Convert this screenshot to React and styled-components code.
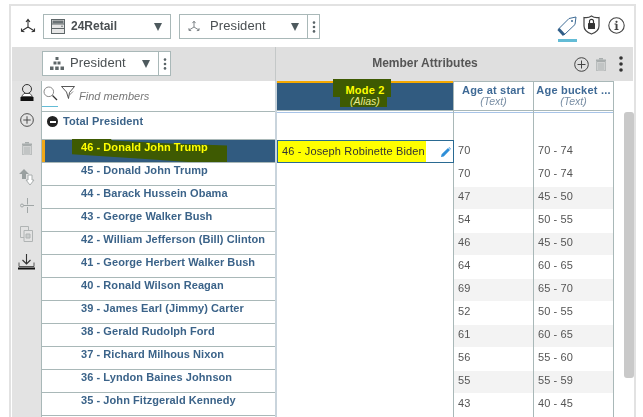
import React from 'react';
import styled, { createGlobalStyle } from 'styled-components';

const Global = createGlobalStyle`
  html, body { margin: 0; padding: 0; background: #fff; overflow: hidden; height: 417px; }
  body { font-family: "Liberation Sans", Arial, sans-serif; }
  * { box-sizing: border-box; }
`;
const Page = styled.div`width:643px;height:417px;padding:4px 8px 0 9px;overflow:hidden;filter:blur(.3px);`;
const Frame = styled.div`width:627px;height:413px;border:solid #e2e2e2;border-width:2px 2px 0 2px;padding-left:1px;display:flex;flex-direction:column;`;
const Toolbar = styled.div`height:41px;flex:none;display:flex;align-items:flex-start;padding:8px 0 0 4px;`;
const ToolIcon = styled.span`width:24px;height:25px;display:flex;align-items:center;justify-content:center;color:#333;margin-right:${p=>p.$mr||0}px;`;
const Select = styled.div`height:25px;width:${p=>p.$w}px;border:1px solid #a9b8b8;background:#fff;display:flex;align-items:center;padding-left:${p=>p.$pl||7}px;color:#4a4f52;font-size:${p=>p.$bold?12:13}px;font-weight:${p=>p.$bold?700:400};letter-spacing:${p=>p.$bold?0:.1}px;margin-left:${p=>p.$ml||0}px;`;
const SelectLabel = styled.span`flex:1;margin-left:${p=>p.$ml}px;margin-top:-2px;`;
const Caret = styled.span`width:0;height:0;border:solid transparent;border-width:8px 4.5px 0;border-top-color:#4e5a5e;margin-right:${p=>p.$mr||8}px;`;
const Dots = styled.div`height:25px;width:13px;margin-left:-1px;border:1px solid #a9b8b8;background:#fff;display:flex;align-items:center;justify-content:center;`;
const ToolRight = styled.div`margin-left:auto;display:flex;align-items:flex-start;padding-right:9px;gap:6px;margin-top:1px;`;
const TagWrap = styled.span`display:flex;flex-direction:column;width:20px;height:32px;align-items:center;`;
const TagLine = styled.i`display:block;width:19px;height:3px;background:#63bcd6;margin-top:2px;`;
const InfoWrap = styled.span`margin-left:2px;margin-top:2px;display:flex;`;
const HeaderBar = styled.div`height:34px;flex:none;display:grid;grid-template-columns:264px 1fr;background:#dfdfdf;margin-right:1px;`;
const HeaderLeft = styled.div`display:flex;align-items:flex-start;padding:4px 0 0 30px;border-right:1px solid #c4c8c8;`;
const HeaderRight = styled.div`display:flex;align-items:center;position:relative;padding:0 9px 0 0;`;
const HeaderTitle = styled.div`position:absolute;left:1px;width:296px;text-align:center;font-weight:700;font-size:12px;color:#555;top:9px;`;
const HeaderActions = styled.div`margin-left:auto;display:flex;align-items:center;gap:7px;`;
const TrashSlot = styled.span`display:flex;margin-right:5px;`;
const Body = styled.div`flex:1;display:flex;min-height:0;`;
const Strip = styled.div`width:29px;flex:none;background:#e3e3e3;display:flex;flex-direction:column;align-items:center;`;
const StripBtn = styled.span`height:${p=>p.$h}px;display:flex;align-items:center;justify-content:center;width:100%;`;
const Members = styled.div`width:236px;flex:none;border-right:2px solid #c9d4dc;border-left:1px solid #a9b8b8;`;
const SearchRow = styled.div`height:31px;display:flex;align-items:flex-start;padding:5px 0 0 1px;position:relative;border-bottom:1px solid #a9b8b8;`;
const FilterSlot = styled.span`margin-left:3px;display:flex;`;
const SearchUnderline = styled.i`position:absolute;left:0;bottom:4px;width:16px;height:1px;background:#63bcd6;`;
const FindText = styled.span`font-style:italic;font-size:11px;color:#777;margin-left:4px;margin-top:4px;`;
const TotalRow = styled.div`height:28px;border-bottom:1px solid #a9b8b8;display:flex;align-items:flex-start;padding:3px 0 0 5px;color:#3b6389;font-weight:700;font-size:11px;letter-spacing:.1px;gap:5px;line-height:13px;`;
const MinusDot = styled.span`width:11px;height:11px;border-radius:50%;background:#222;display:flex;align-items:center;justify-content:center;margin-top:1px;&::after{content:"";width:6px;height:2px;background:#fff;}`;
const MemberRow = styled.div`height:23px;border-bottom:1px solid #a9b8b8;padding:0 0 0 39px;font-weight:700;font-size:11px;line-height:14px;letter-spacing:.07px;color:${p=>p.$sel?'#ffff00':'#3b6389'};background:${p=>p.$sel?'#315b80':'#fff'};box-shadow:${p=>p.$sel?'inset 3px 0 0 #f0a818':'none'};white-space:nowrap;`;
const Marked = styled.span`position:relative;z-index:0;&::before{content:"";position:absolute;z-index:-1;left:-9px;top:-2px;width:155px;height:23px;background:#3e5a02;clip-path:polygon(0 0,25% 0,26% 6%,60% 18%,100% 28%,100% 100%,75% 100%,50% 88%,0 66%);}`;
const Grid = styled.div`flex:1;display:flex;min-width:0;`;
const Column = styled.div`width:${p=>p.$w}px;flex:none;border-right:1px solid #a9b8b8;`;
const ColHead = styled.div`height:30px;background:${p=>p.$blue?'#315b80':'#fff'};border-top:${p=>p.$blue?'2px solid #f5a800':'1px solid #a9b8b8'};border-bottom:1px solid #a9b8b8;text-align:center;font-size:11px;letter-spacing:.2px;font-weight:700;color:${p=>p.$blue?'#ffff00':'#3f6a96'};line-height:10px;padding-top:${p=>p.$blue?2:3}px;position:relative;z-index:0;white-space:nowrap;overflow:${p=>p.$blue?'visible':'hidden'};`;
const ColSub = styled.div`font-size:10.5px;font-style:italic;font-weight:400;letter-spacing:0;color:${p=>p.$blue?'#e8ec90':'#7a8fa5'};line-height:11px;margin-top:1px;`;
const MarkHead = styled.span`position:absolute;z-index:-1;left:56px;top:-4px;width:58px;height:18px;background:#3e5a02;`;
const MarkSub = styled.span`position:absolute;z-index:-1;left:63px;top:14px;width:47px;height:10px;background:#3e5a02;`;
const BlueRule = styled.div`height:1px;margin-top:1px;background:#a8c4e8;`;
const Gap = styled.div`height:27px;`;
const Cell = styled.div`height:23px;padding:3px 0 0 4px;font-size:11px;letter-spacing:.1px;line-height:14px;color:#555;background:${p=>p.$odd?'#f3f3f3':'#fff'};box-shadow:${p=>p.$odd?'inset 0 1px 0 #fff':'none'};`;
const EditCell = styled.div`height:23px;margin:0 -1px 0 0;border:1px solid #2a6a92;display:flex;align-items:center;background:#fff;padding-right:2px;font-size:11px;letter-spacing:.15px;color:#333;`;
const Yellow = styled.span`background:#ffff00;height:21px;line-height:21px;padding:0 0 0 4px;width:148px;white-space:nowrap;flex:none;`;
const Pencil = styled.span`margin-left:auto;display:flex;color:#2f8fd8;`;
const Track = styled.div`flex:1;padding:31px 0 0 10px;`;
const Thumb = styled.div`height:266px;width:10px;background:#c9c9c9;border-radius:3px;`;

const DotsIcon = ({ size=2.4, gap=3.2, color='#5a6468' }) => (
  <svg width="6" height="16" viewBox="0 0 6 16"><circle cx="3" cy={8-gap-size/2} r={size/2+.1} fill={color}/><circle cx="3" cy="8" r={size/2+.1} fill={color}/><circle cx="3" cy={8+gap+size/2} r={size/2+.1} fill={color}/></svg>
);
const Axis = ({ s=18, c='#333' }) => (
  <svg width={s} height={s} viewBox="0 0 18 18" fill="none" stroke={c} strokeWidth="1.1"><path d="M9 9V2M9 9L2.500 13M9 9l6.500 4M7 4l2-2.500L11 4M2.500 10.500v2.800l2.900.4M15.500 10.500v2.800l-2.900.4"/></svg>
);
const Db = () => (<svg width="14" height="15" viewBox="0 0 14 15"><rect x=".5" y=".5" width="13" height="14" fill="#e6e6e6" stroke="#5e6668"/><path d="M.5 5h13M.5 9.500h13" stroke="#5e6668"/><circle cx="11" cy="7.300" r=".8" fill="#5e6668"/><rect x="1.500" y="1.500" width="11" height="3" fill="#6a7275"/></svg>);
const Hier = () => (<svg width="14" height="13" viewBox="0 0 14 13" fill="#5e6668"><rect x="5.500" y="0" width="3" height="3"/><rect x="3.500" y="4.500" width="3" height="3"/><rect x="7.500" y="4.500" width="3" height="3"/><rect x="0" y="9.500" width="3.500" height="3.500"/><rect x="5.200" y="9.500" width="3.500" height="3.500"/><rect x="10.500" y="9.500" width="3.500" height="3.500"/></svg>);
const Tag = () => (<svg width="20" height="22" viewBox="0 0 20 22" fill="none"><path d="M1.500 14L12 3.500l7-1.500-1 7.500L7 20z" stroke="#3c6a94" strokeWidth="1"/><path d="M1.500 14L7 20" stroke="#2f5d88" strokeWidth="3"/><circle cx="15" cy="6" r="1" fill="#3c6a94"/></svg>);
const Shield = () => (<svg width="17" height="20" viewBox="0 0 17 20" fill="none"><path d="M1 2.500C4 3 6.500 2.500 8.500 1c2 1.500 4.500 2 7.500 1.500V11c0 4-3.500 6.500-7.500 8C4.500 17.500 1 15 1 11z" stroke="#444" strokeWidth="1.200"/><rect x="5" y="8" width="7" height="6" rx=".6" fill="#333"/><path d="M6.500 8V6.300a2 2 0 014 0V8" stroke="#333" strokeWidth="1.200"/></svg>);
const Info = () => (<svg width="17" height="17" viewBox="0 0 17 17" fill="none"><circle cx="8.500" cy="8.500" r="7.700" stroke="#444" strokeWidth="1.100"/><rect x="7.600" y="7" width="1.900" height="5.500" fill="#444"/><circle cx="8.500" cy="4.800" r="1.100" fill="#444"/><path d="M6.500 7h2M6.500 12.500h4" stroke="#444"/></svg>);
const PlusC = ({s=15}) => (<svg width={s} height={s} viewBox="0 0 15 15" fill="none" stroke="#444"><circle cx="7.500" cy="7.500" r="6.800"/><path d="M7.500 3.500v8M3.500 7.500h8"/></svg>);
const Trash = ({c='#a8adad'}) => (<svg width="10" height="13" viewBox="0 0 10 13" fill={c}><rect x="3" y="0" width="4" height="1.500"/><rect x="0" y="1.500" width="10" height="1.500"/><rect x=".8" y="3.500" width="8.400" height="9.500" fill="none" stroke={c}/><rect x="2" y="4.500" width="6" height="7.500" opacity=".55"/></svg>);
const Kebab = () => (<svg width="6" height="16" viewBox="0 0 6 16" fill="#333"><circle cx="3" cy="2" r="1.800"/><circle cx="3" cy="8" r="1.800"/><circle cx="3" cy="14" r="1.800"/></svg>);
const User = () => (<svg width="16" height="18" viewBox="0 0 16 18" fill="none"><circle cx="8" cy="5" r="4.500" stroke="#333"/><path d="M5 9.500h6l2.500 3h-11z" fill="#fff" stroke="#333" strokeWidth=".8"/><rect x="1.500" y="13" width="13" height="4" fill="#111"/></svg>);
const MoveI = () => (<svg width="16" height="17" viewBox="0 0 16 17"><path d="M5 0L0 5h3v5h4V5h3z" fill="#9aa0a0"/><path d="M11 16l4-5h-2V6H9v5H7z" fill="#fff" stroke="#a8adad"/></svg>);
const Scissors = () => (<svg width="14" height="15" viewBox="0 0 14 15" fill="none" stroke="#a0a6a6"><path d="M7.500 0v6.500M7.500 9v6"/><circle cx="2" cy="7.500" r="1.500"/><path d="M3.500 7.500H14"/></svg>);
const CopyI = () => (<svg width="13" height="16" viewBox="0 0 13 16" fill="none" stroke="#b0b4b4"><path d="M.5.500h8v11h-8z"/><path d="M4 4.500h8.500v11H4z" fill="#e3e3e3"/><path d="M6 8h4v4H6z" fill="#c9cccc"/></svg>);
const Download = () => (<svg width="17" height="16" viewBox="0 0 17 16" fill="none"><path d="M8.500 0v9M4.500 6l4 4 4-4" stroke="#333" strokeWidth="1.100"/><path d="M1 8.500v4h15v-4" stroke="#333" strokeWidth=".8"/><rect x="0" y="13.500" width="17" height="2" fill="#111"/></svg>);
const Search = () => (<svg width="15" height="15" viewBox="0 0 15 15" fill="none"><circle cx="5.800" cy="5.800" r="4.800" stroke="#888"/><path d="M9.500 9.500l4.500 4.500" stroke="#333" strokeWidth="1.300"/></svg>);
const Filter = () => (<svg width="14" height="14" viewBox="0 0 14 14" fill="none" stroke="#444" strokeWidth=".9"><path d="M.5.500h13L8.500 6.500 7.500 12.500 5.500 6z"/><path d="M8 9.500l4-4" stroke="#777"/></svg>);
const PencilI = () => (<svg width="10" height="10" viewBox="0 0 10 10" fill="currentColor"><path d="M0 10l.6-2.700L7 1l2 2-6.300 6.400zM7.600.4l.5-.4 1.900 1.900-.5.500z"/></svg>);

const presidents = ['46 - Donald John Trump','45 - Donald John Trump','44 - Barack Hussein Obama','43 - George Walker Bush','42 - William Jefferson (Bill) Clinton','41 - George Herbert Walker Bush','40 - Ronald Wilson Reagan','39 - James Earl (Jimmy) Carter','38 - Gerald Rudolph Ford','37 - Richard Milhous Nixon','36 - Lyndon Baines Johnson','35 - John Fitzgerald Kennedy',''];
const ages = ['70','70','47','54','46','64','69','52','61','56','55','43',''];
const buckets = ['70 - 74','70 - 74','45 - 50','50 - 55','45 - 50','60 - 65','65 - 70','50 - 55','60 - 65','55 - 60','55 - 59','40 - 45',''];

export default function App() {
  return (
    <Page>
      <Global />
      <Frame>
        <Toolbar>
          <ToolIcon $mr={3}><Axis /></ToolIcon>
          <Select $w={128} $bold><Db /><SelectLabel $ml={6}>24Retail</SelectLabel><Caret /></Select>
          <Select $w={129} $ml={8} $pl={7}><Axis s={14} c="#6a7275" /><SelectLabel $ml={9}>President</SelectLabel><Caret /></Select>
          <Dots><DotsIcon /></Dots>
          <ToolRight>
            <TagWrap><Tag /><TagLine /></TagWrap>
            <Shield />
            <InfoWrap><Info /></InfoWrap>
          </ToolRight>
        </Toolbar>
        <HeaderBar>
          <HeaderLeft>
            <Select $w={117} $pl={7}><Hier /><SelectLabel $ml={6}>President</SelectLabel><Caret /></Select>
            <Dots><DotsIcon /></Dots>
          </HeaderLeft>
          <HeaderRight>
            <HeaderTitle>Member Attributes</HeaderTitle>
            <HeaderActions><PlusC /><TrashSlot><Trash /></TrashSlot><Kebab /></HeaderActions>
          </HeaderRight>
        </HeaderBar>
        <Body>
          <Strip>
            <StripBtn $h={24}><User /></StripBtn>
            <StripBtn $h={29}><PlusC s={14} /></StripBtn>
            <StripBtn $h={28}><Trash /></StripBtn>
            <StripBtn $h={30}><MoveI /></StripBtn>
            <StripBtn $h={27}><Scissors /></StripBtn>
            <StripBtn $h={29}><CopyI /></StripBtn>
            <StripBtn $h={28}><Download /></StripBtn>
          </Strip>
          <Members>
            <SearchRow>
              <Search /><FilterSlot><Filter /></FilterSlot>
              <FindText>Find members</FindText>
              <SearchUnderline />
            </SearchRow>
            <TotalRow><MinusDot />Total President</TotalRow>
            {presidents.map((p, i) => (
              <MemberRow key={i} $sel={i === 0}>{i === 0 ? <Marked>{p}</Marked> : p}</MemberRow>
            ))}
          </Members>
          <Grid>
            <Column $w={177}>
              <ColHead $blue><MarkHead /><MarkSub />Mode 2<ColSub $blue>(Alias)</ColSub></ColHead>
              <BlueRule />
              <Gap />
              <EditCell><Yellow>46 - Joseph Robinette Biden</Yellow><Pencil><PencilI /></Pencil></EditCell>
            </Column>
            <Column $w={80}>
              <ColHead>Age at start<ColSub>(Text)</ColSub></ColHead>
              <BlueRule />
              <Gap />
              {ages.map((a, i) => <Cell key={i} $odd={i % 2 === 0 && i > 0}>{a}</Cell>)}
            </Column>
            <Column $w={80}>
              <ColHead>Age bucket ...<ColSub>(Text)</ColSub></ColHead>
              <BlueRule />
              <Gap />
              {buckets.map((a, i) => <Cell key={i} $odd={i % 2 === 0 && i > 0}>{a}</Cell>)}
            </Column>
            <Track><Thumb /></Track>
          </Grid>
        </Body>
      </Frame>
    </Page>
  );
}
